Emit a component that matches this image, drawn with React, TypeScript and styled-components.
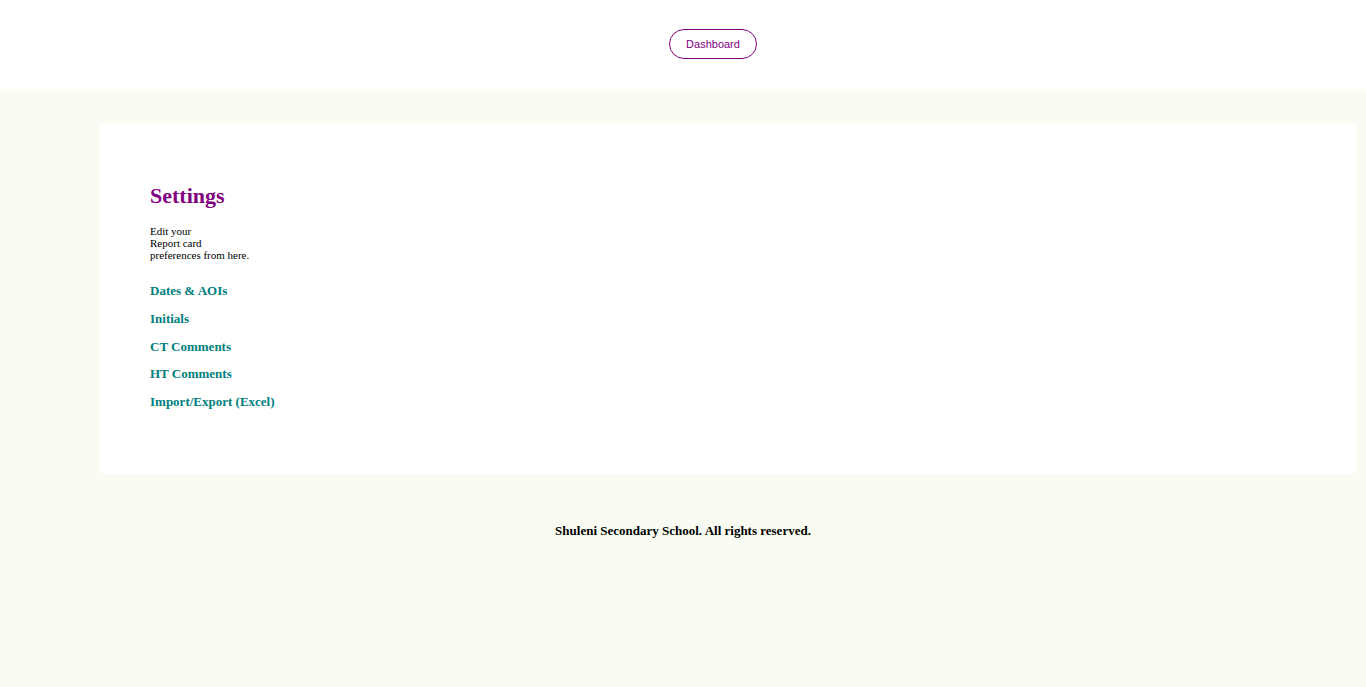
import React from "react";
import styled, { createGlobalStyle } from "styled-components";

const GlobalStyle = createGlobalStyle`
  html, body { margin: 0; padding: 0; }
  body {
    background: #f9fcf3;
    font-family: "Liberation Serif", "Times New Roman", serif;
    color: #000;
    min-height: 687px;
  }
`;

const Header = styled.header`
  box-sizing: border-box;
  height: 89px;
  padding: 29px 0 0 60px;
  background: #ffffff;
  display: flex;
  align-items: flex-start;
  justify-content: center;
`;

const NavButton = styled.button`
  box-sizing: border-box;
  height: 30px;
  padding: 0 16px;
  border: 1px solid #800080;
  border-radius: 15px;
  background: #ffffff;
  color: #800080;
  font-family: "Liberation Sans", Arial, sans-serif;
  font-size: 11px;
  cursor: pointer;
`;

const Main = styled.main`
  padding: 35px 10px 0 100px;
`;

const Card = styled.section`
  background: #ffffff;
  padding: 59px 50px 65px;
`;

const Title = styled.h2`
  margin: 0;
  font-size: 22px;
  font-weight: bold;
  line-height: 25px;
  color: #800080;
`;

const Description = styled.p`
  margin: 17px 0 0;
  font-size: 11px;
  line-height: 12px;
`;

const LinkList = styled.nav`
  margin-top: 22px;
  display: flex;
  flex-direction: column;
  align-items: flex-start;
  gap: 12.75px;
`;

const SettingLink = styled.a`
  font-size: 13px;
  line-height: 15px;
  font-weight: bold;
  color: #008080;
  text-decoration: none;
  cursor: pointer;
`;

const Footer = styled.footer`
  padding-top: 49px;
  text-align: center;
  font-size: 13px;
  line-height: 15px;
  font-weight: bold;
`;

const links = [
  "Dates & AOIs",
  "Initials",
  "CT Comments",
  "HT Comments",
  "Import/Export (Excel)",
];

export default function App() {
  return (
    <>
      <GlobalStyle />
      <Header>
        <NavButton>Dashboard</NavButton>
      </Header>
      <Main>
        <Card>
          <Title>Settings</Title>
          <Description>
            Edit your
            <br />
            Report card
            <br />
            preferences from here.
          </Description>
          <LinkList>
            {links.map((l) => (
              <SettingLink key={l}>{l}</SettingLink>
            ))}
          </LinkList>
        </Card>
      </Main>
      <Footer>Shuleni Secondary School. All rights reserved.</Footer>
    </>
  );
}
